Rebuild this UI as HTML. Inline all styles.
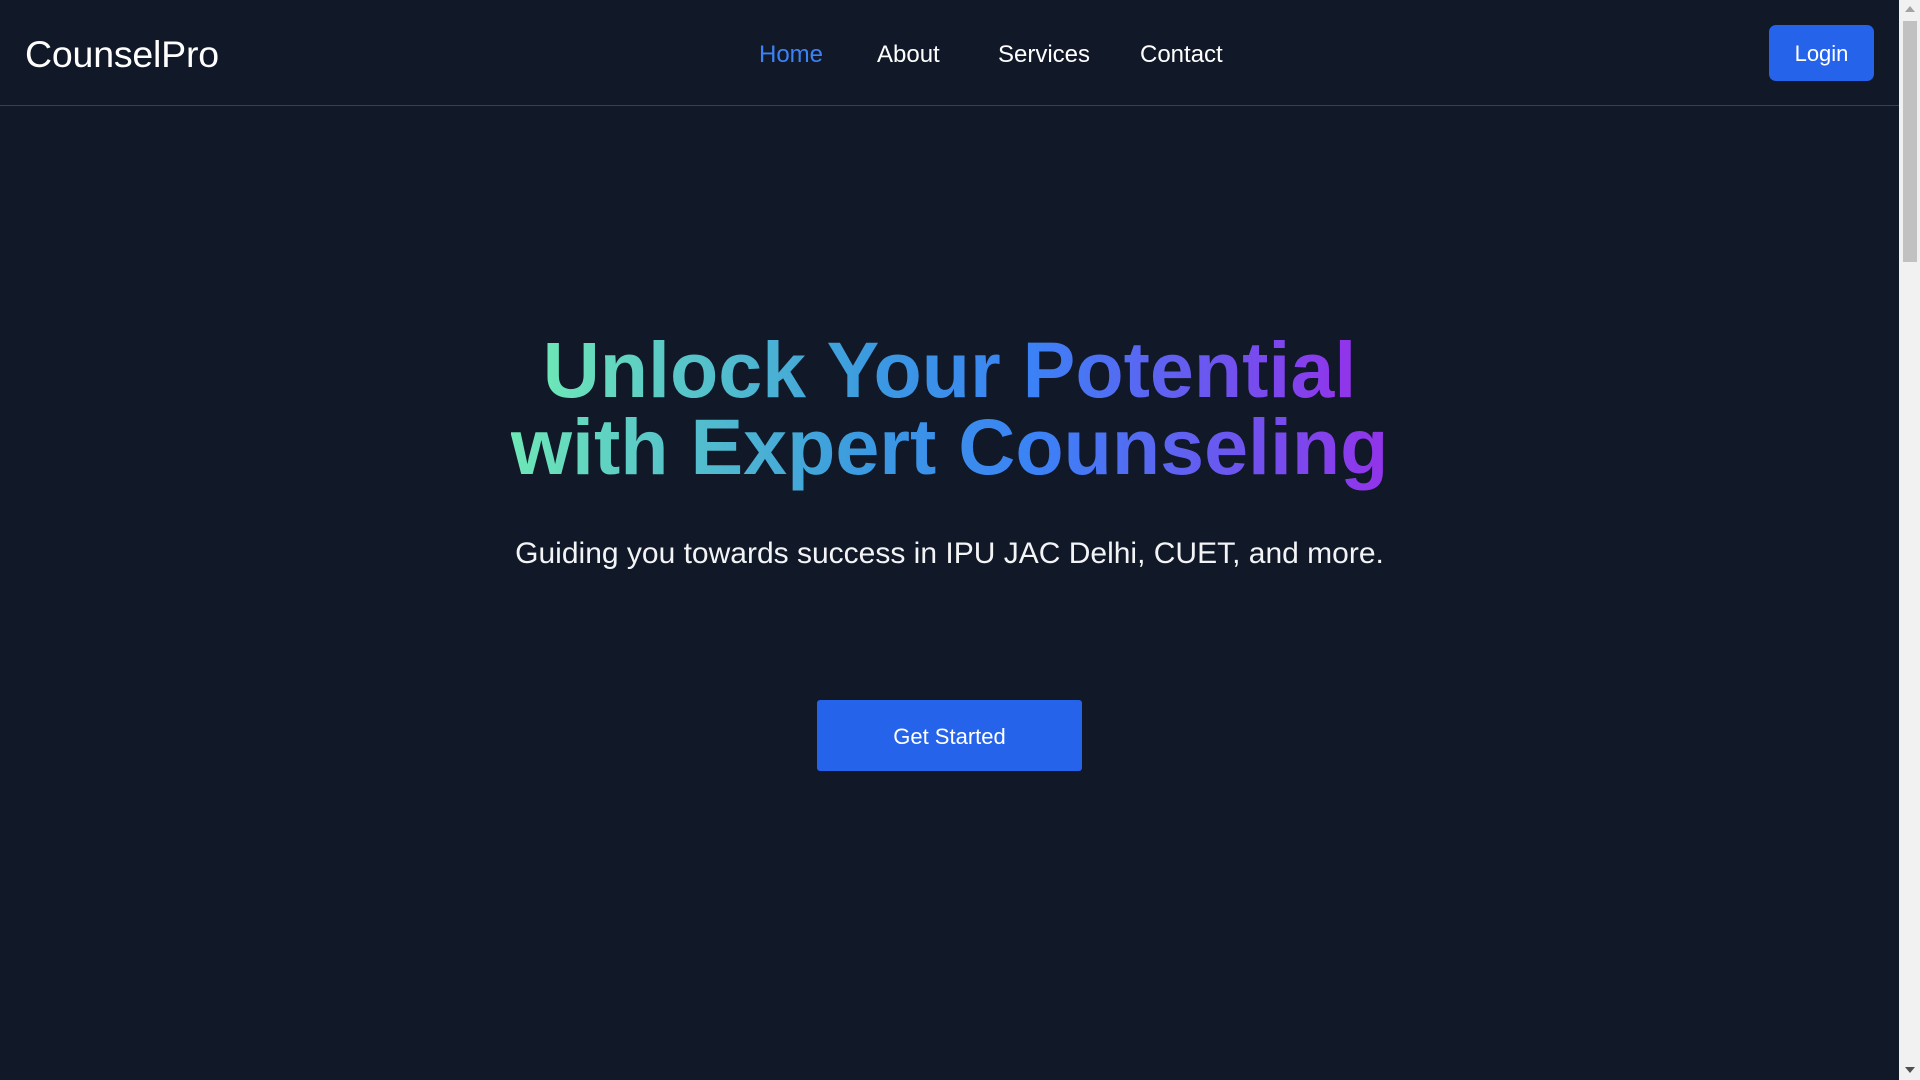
<!DOCTYPE html>
<html><head><meta charset="utf-8"><style>
*{margin:0;padding:0;box-sizing:border-box}
html,body{width:1920px;height:1080px;overflow:hidden;background:#111827;font-family:"Liberation Sans",sans-serif;color:#fff}
.main{position:absolute;left:0;top:0;width:1899px;height:1080px}
nav{position:absolute;left:0;top:0;width:1899px;height:106px;border-bottom:1px solid #374151}
.logo{position:absolute;left:25px;top:31px;font-size:37.5px;line-height:46px;letter-spacing:-0.2px}
.links{position:absolute;left:0;width:1899px;top:40px;font-size:24px;line-height:30px}
.links a{position:absolute;color:#fff;text-decoration:none}
.login{position:absolute;left:1769px;top:25px;width:105px;height:56px;background:#2563eb;border-radius:7px;font-size:22px;line-height:58px;text-align:center}
h1{position:absolute;left:0;width:1899px;top:331px;text-align:center;font-size:79px;line-height:77px;font-weight:700}
h1 span{background:linear-gradient(90deg,#6ee7b7 0%,#3b9ae0 40%,#3b82f6 60%,#9333ea 100%);-webkit-background-clip:text;background-clip:text;color:transparent;-webkit-box-decoration-break:clone;box-decoration-break:clone}
.sub{position:absolute;left:0;width:1899px;top:535px;text-align:center;font-size:30px;line-height:38px;color:#f3f4f6}
.btn{position:absolute;left:817px;top:700px;width:265px;height:71px;background:#2563eb;border-radius:3px;font-size:22px;line-height:73px;text-align:center}
.sb{position:absolute;left:1899px;top:0;width:21px;height:1080px;background:#f1f1f1}
.th{position:absolute;left:1903px;top:21px;width:14px;height:241px;background:#c1c1c1}
</style></head><body>
<div class="main">
<nav>
<div class="logo">CounselPro</div>
<div class="links">
<a style="left:759px;color:#3b82f6">Home</a>
<a style="left:877px">About</a>
<a style="left:998px">Services</a>
<a style="left:1140px">Contact</a>
</div>
<div class="login">Login</div>
</nav>
<h1><span>Unlock Your Potential</span><br><span>with Expert Counseling</span></h1>
<div class="sub">Guiding you towards success in IPU JAC Delhi, CUET, and more.</div>
<div class="btn">Get Started</div>
</div>
<div class="sb"></div><div class="th"></div>
<div style="position:absolute;left:1905px;top:6px;width:0;height:0;border-left:5px solid transparent;border-right:5px solid transparent;border-bottom:6px solid #a3a3a3"></div>
<div style="position:absolute;left:1905px;top:1067px;width:0;height:0;border-left:5px solid transparent;border-right:5px solid transparent;border-top:6px solid #505050"></div>
</body></html>
